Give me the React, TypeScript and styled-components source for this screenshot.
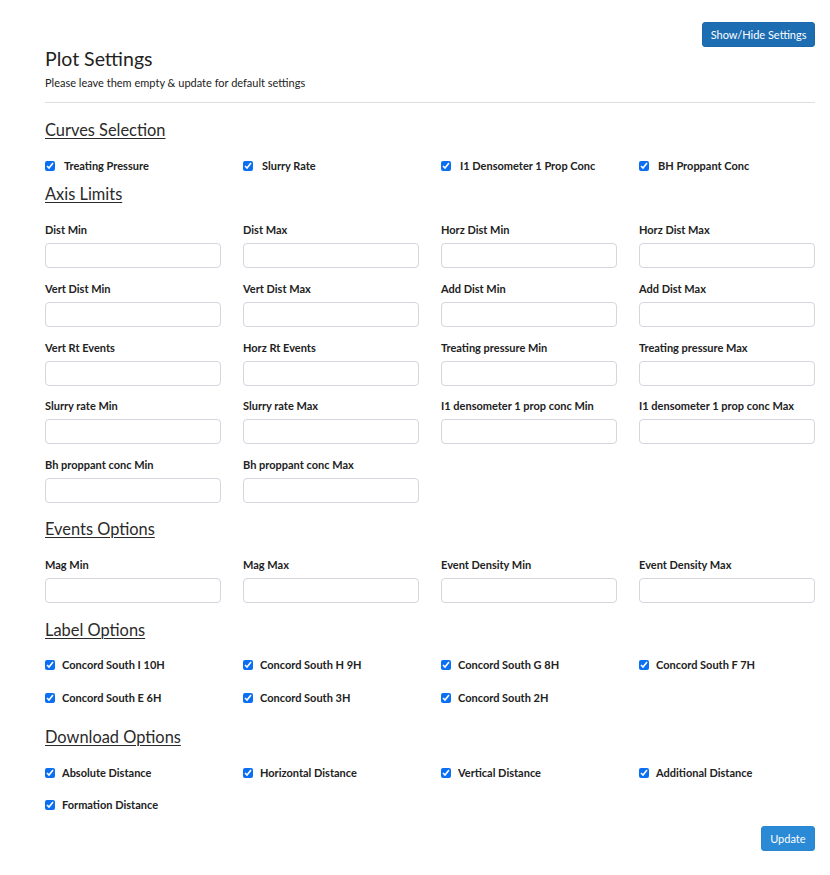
import React from 'react'
import styled, { createGlobalStyle } from 'styled-components'

const GlobalStyle = createGlobalStyle`
  html, body {
    margin: 0;
    padding: 0;
    background: #fff;
  }
  body {
    font-family: 'Lato', 'Noto Sans', sans-serif;
    color: #222;
  }
`

const Page = styled.div`
  padding: 22px 15px 20px 45px;
  display: flex;
  flex-direction: column;
`

const TopBar = styled.div`
  display: flex;
  justify-content: flex-end;
`

const Button = styled.button<{ $tone?: 'dark' | 'light' }>`
  font-family: 'Lato', 'Noto Sans', sans-serif;
  font-size: 11px;
  height: 25px;
  padding: ${({ $tone }) => ($tone === 'light' ? '0 8.5px' : '0 7.5px')};
  color: #fff;
  background-color: ${({ $tone }) => ($tone === 'light' ? '#2b8ad6' : '#1c6db2')};
  border: 1px solid ${({ $tone }) => ($tone === 'light' ? '#2a86d0' : '#1a68aa')};
  border-radius: 3px;
  cursor: pointer;
`

const Title = styled.h2`
  margin: 0;
  font-size: 19.5px;
  line-height: 23px;
  font-weight: 400;
  color: #222;
`

const Subtitle = styled.p`
  margin: 6px 0 0;
  font-size: 11px;
  line-height: 14px;
  color: #222;
`

const Divider = styled.hr`
  margin: 12px 0 0;
  border: 0;
  border-top: 1px solid #dedede;
`

const SectionTitle = styled.h3<{ $gap: number }>`
  margin: ${({ $gap }) => $gap}px 0 0;
  font-size: 16.4px;
  line-height: 20px;
  font-weight: 400;
  color: #2a2a2a;
  text-decoration: underline;
  text-underline-offset: 2px;
  text-decoration-thickness: 1px;
`

const Grid = styled.div<{ $top: number; $rowGap: number }>`
  margin-top: ${({ $top }) => $top}px;
  display: grid;
  grid-template-columns: repeat(4, 176px);
  column-gap: 22px;
  row-gap: ${({ $rowGap }) => $rowGap}px;
`

const CheckItem = styled.label<{ $space: number }>`
  display: flex;
  align-items: center;
  gap: ${({ $space }) => $space}px;
  height: 15px;
  font-size: 11px;
  font-weight: 700;
  color: #222;
  white-space: nowrap;
`

const Box = styled.input`
  width: 10px;
  height: 10px;
  margin: 0;
  accent-color: #0b6ff2;
`

const Field = styled.div`
  display: flex;
  flex-direction: column;
`

const FieldLabel = styled.label`
  font-size: 11px;
  line-height: 15px;
  font-weight: 700;
  color: #222;
  margin-bottom: 6px;
  white-space: nowrap;
`

const TextInput = styled.input`
  box-sizing: border-box;
  width: 100%;
  height: 25px;
  border: 1px solid #d3d6dc;
  border-radius: 4px;
  padding: 0 8px;
  outline: none;
`

const Footer = styled.div`
  margin-top: 14px;
  display: flex;
  justify-content: flex-end;
`

const curves = ['Treating Pressure', 'Slurry Rate', 'I1 Densometer 1 Prop Conc', 'BH Proppant Conc']

const axisFields = [
  'Dist Min',
  'Dist Max',
  'Horz Dist Min',
  'Horz Dist Max',
  'Vert Dist Min',
  'Vert Dist Max',
  'Add Dist Min',
  'Add Dist Max',
  'Vert Rt Events',
  'Horz Rt Events',
  'Treating pressure Min',
  'Treating pressure Max',
  'Slurry rate Min',
  'Slurry rate Max',
  'I1 densometer 1 prop conc Min',
  'I1 densometer 1 prop conc Max',
  'Bh proppant conc Min',
  'Bh proppant conc Max',
]

const eventFields = ['Mag Min', 'Mag Max', 'Event Density Min', 'Event Density Max']

const labels = [
  'Concord South I 10H',
  'Concord South H 9H',
  'Concord South G 8H',
  'Concord South F 7H',
  'Concord South E 6H',
  'Concord South 3H',
  'Concord South 2H',
]

const downloads = [
  'Absolute Distance',
  'Horizontal Distance',
  'Vertical Distance',
  'Additional Distance',
  'Formation Distance',
]

type ChecksProps = { items: string[]; space: number; top: number; rowGap: number }

const Checks = ({ items, space, top, rowGap }: ChecksProps) => (
  <Grid $top={top} $rowGap={rowGap}>
    {items.map((item) => (
      <CheckItem key={item} $space={space}>
        <Box type="checkbox" defaultChecked />
        {item}
      </CheckItem>
    ))}
  </Grid>
)

const Fields = ({ items }: { items: string[] }) => (
  <Grid $top={18} $rowGap={12.75}>
    {items.map((item) => (
      <Field key={item}>
        <FieldLabel>{item}</FieldLabel>
        <TextInput type="text" />
      </Field>
    ))}
  </Grid>
)

export default function App() {
  return (
    <Page>
      <GlobalStyle />
      <TopBar>
        <Button>Show/Hide Settings</Button>
      </TopBar>
      <Title>Plot Settings</Title>
      <Subtitle>Please leave them empty &amp; update for default settings</Subtitle>
      <Divider />

      <SectionTitle $gap={17}>Curves Selection</SectionTitle>
      <Checks items={curves} space={9} top={18} rowGap={18} />

      <SectionTitle $gap={11}>Axis Limits</SectionTitle>
      <Fields items={axisFields} />

      <SectionTitle $gap={16}>Events Options</SectionTitle>
      <Fields items={eventFields} />

      <SectionTitle $gap={17}>Label Options</SectionTitle>
      <Checks items={labels} space={7} top={17} rowGap={18} />

      <SectionTitle $gap={22}>Download Options</SectionTitle>
      <Checks items={downloads} space={7} top={18} rowGap={17} />

      <Footer>
        <Button $tone="light">Update</Button>
      </Footer>
    </Page>
  )
}
